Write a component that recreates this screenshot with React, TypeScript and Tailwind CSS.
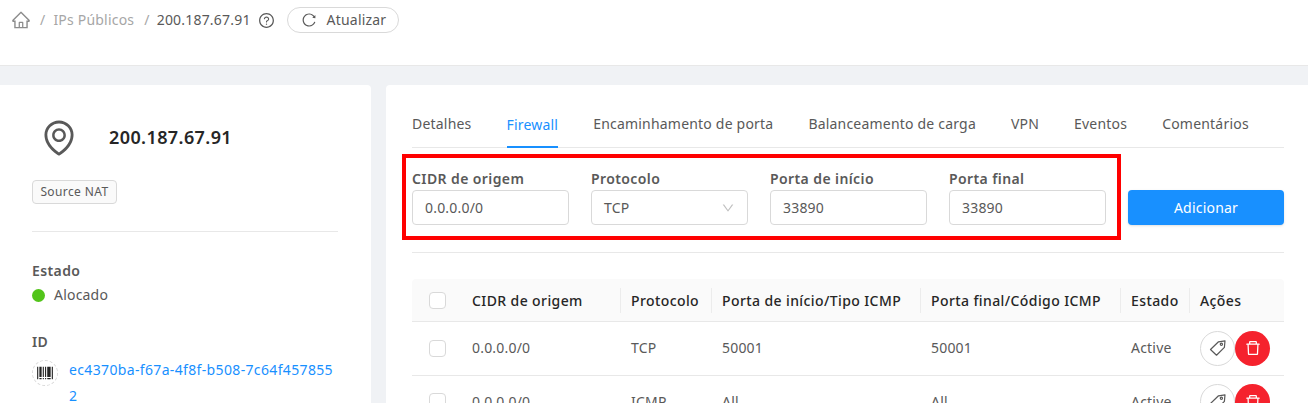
import React from 'react';
import {
  AiOutlineBarcode,
  AiOutlineDelete,
  AiOutlineDown,
  AiOutlineEnvironment,
  AiOutlineHome,
  AiOutlineQuestionCircle,
  AiOutlineReload,
} from 'react-icons/ai';

const tabs = ['Detalhes', 'Firewall', 'Encaminhamento de porta', 'Balanceamento de carga', 'VPN', 'Eventos', 'Comentários'];

const headers = [
  { label: 'CIDR de origem', w: 'w-[159px]' },
  { label: 'Protocolo', w: 'w-[91px]' },
  { label: 'Porta de início/Tipo ICMP', w: 'w-[209px]' },
  { label: 'Porta final/Código ICMP', w: 'w-[200px]' },
  { label: 'Estado', w: 'w-[69px]' },
];

const rows = [
  ['0.0.0.0/0', 'TCP', '50001', '50001', 'Active'],
  ['0.0.0.0/0', 'ICMP', 'All', 'All', 'Active'],
];

const TagIcon = () => (
  <svg viewBox="0 0 18 18" className="h-[18px] w-[18px] text-[#595959]" fill="none" stroke="currentColor" strokeWidth="1.2" strokeLinejoin="round">
    <path d="M1.5 10.5 L9.5 2.8 L16 1.8 L15.4 8.4 L7.5 16.2 Z" />
    <circle cx="12.4" cy="5.2" r="1.1" />
  </svg>
);

const Field: React.FC<{ label: string; value: string; select?: boolean }> = ({ label, value, select }) => (
  <div className="w-[157px]">
    <div className="h-[25px] text-sm font-semibold leading-[28px] tracking-[0.4px] text-[#595959]">{label}</div>
    <div className="flex h-[35px] items-center justify-between rounded border border-[#d9d9d9] bg-white pl-[12px] pr-[12px] text-sm text-[#595959]">
      <span>{value}</span>
      {select && <AiOutlineDown className="h-[14px] w-[14px] text-[#bfbfbf]" />}
    </div>
  </div>
);

export default function App() {
  return (
    <div className="h-screen w-full overflow-hidden bg-[#f0f2f5] font-['Noto_Sans',sans-serif] text-sm tracking-[0.2px] text-[#595959]">
      {/* Page header */}
      <header className="flex h-[66px] items-start border-b border-[#e8e8e8] bg-white pl-[11px] pt-[7px]">
        <div className="flex h-[26px] items-center">
          <AiOutlineHome className="h-[20px] w-[20px] text-[#8c8c8c]" />
          <span className="ml-[9px] text-[#a6a6a6]">/</span>
          <span className="ml-[8px] text-[#a6a6a6]">IPs Públicos</span>
          <span className="ml-[10px] text-[#a6a6a6]">/</span>
          <span className="ml-[7px] text-[#595959]">200.187.67.91</span>
          <AiOutlineQuestionCircle className="ml-[7px] h-[17px] w-[17px] text-[#595959]" />
          <button className="ml-[12px] flex h-[26px] w-[112px] items-center gap-[10px] rounded-full border border-[#d9d9d9] bg-white pl-[13px] text-[#595959]">
            <AiOutlineReload className="h-[16px] w-[16px]" />
            <span>Atualizar</span>
          </button>
        </div>
      </header>

      <main className="mt-[19px] flex gap-[15px]">
        {/* Left info card */}
        <aside className="h-[340px] w-[371px] shrink-0 rounded-tr bg-white pl-[32px] pr-[33px] pt-[32px]">
          <div className="flex h-[42px] items-center">
            <AiOutlineEnvironment className="ml-[7px] h-[40px] w-[40px] text-[#595959]" />
            <span className="ml-[30px] text-[18px] font-semibold tracking-[0.4px] text-[#262626]">200.187.67.91</span>
          </div>
          <div className="mt-[21px] inline-flex h-[24px] w-[85px] items-center justify-center rounded border border-[#d9d9d9] bg-[#fafafa] text-xs tracking-[0.4px] text-[#595959]">
            Source NAT
          </div>
          <div className="mt-[27px] h-px bg-[#e8e8e8]" />
          <div className="mt-[28px] text-sm font-semibold leading-[22px] tracking-[0.4px]">Estado</div>
          <div className="mt-[1px] flex h-[24px] items-center gap-[9px]">
            <span className="h-[13px] w-[13px] rounded-full bg-[#52c41a]" />
            <span>Alocado</span>
          </div>
          <div className="mt-[24px] text-sm font-semibold leading-[22px] tracking-[0.4px]">ID</div>
          <div className="mt-[4px] flex gap-[11px]">
            <span className="mt-[3px] flex h-[26px] w-[26px] shrink-0 items-center justify-center rounded-full border border-dashed border-[#d9d9d9]">
              <AiOutlineBarcode className="h-[18px] w-[18px] text-[#262626]" />
            </span>
            <a className="break-all leading-[26px] tracking-[0.35px] text-[#1890ff]">ec4370ba-f67a-4f8f-b508-7c64f4578552</a>
          </div>
        </aside>

        {/* Right tabs card */}
        <section className="h-[340px] min-w-0 flex-1 rounded-tl bg-white pl-[26px] pr-[24px]">
          <nav className="flex h-[63px] items-end gap-[35px] border-b border-[#e8e8e8]">
            {tabs.map((tab) => (
              <div
                key={tab}
                className={`flex h-[33px] items-start whitespace-nowrap leading-[19px] ${
                  tab === 'Firewall' ? '-mb-px border-b-2 border-[#1890ff] text-[#1890ff]' : ''
                }`}
              >
                {tab}
              </div>
            ))}
          </nav>

          {/* Form row, with the red highlight box */}
          <div className="flex h-[105px] items-start border-b border-[#e8e8e8] pt-[6px]">
            <div className="-ml-[10px] flex h-[86px] w-[719px] gap-[22px] border-4 border-[#ff0000] pl-[6px] pt-[7px]">
              <Field label="CIDR de origem" value="0.0.0.0/0" />
              <Field label="Protocolo" value="TCP" select />
              <Field label="Porta de início" value="33890" />
              <Field label="Porta final" value="33890" />
            </div>
            <button className="ml-[7px] mt-[36px] h-[35px] flex-1 rounded bg-[#1890ff] text-sm text-white shadow-sm">
              Adicionar
            </button>
          </div>

          {/* Rules table */}
          <div className="mt-[26px]">
            <div className="flex h-[43px] items-center rounded-t border-b border-[#e8e8e8] bg-[#fafafa] font-medium leading-[22px] tracking-[0.4px] text-[#262626]">
              <div className="w-[50px] pl-[17px]">
                <span className="block h-[17px] w-[17px] rounded border border-[#d9d9d9] bg-white" />
              </div>
              {headers.map((h) => (
                <div key={h.label} className={`${h.w} flex h-[25px] items-center whitespace-nowrap border-r border-[#ececec] pl-[10px] pt-[1px]`}>
                  {h.label}
                </div>
              ))}
              <div className="pl-[10px] pt-[1px]">Ações</div>
            </div>
            {rows.map((row, r) => (
              <div key={r} className="flex h-[53.5px] items-center border-b border-[#e8e8e8]">
                <div className="w-[50px] pl-[17px]">
                  <span className="block h-[17px] w-[17px] rounded border border-[#d9d9d9] bg-white" />
                </div>
                {row.map((cell, i) => (
                  <div key={i} className={`${headers[i].w} whitespace-nowrap pl-[10px]`}>
                    {cell}
                  </div>
                ))}
                <div className="flex pl-[10px]">
                  <button className="flex h-[35px] w-[35px] items-center justify-center rounded-full border border-[#d9d9d9] bg-white">
                    <TagIcon />
                  </button>
                  <button className="flex h-[35px] w-[35px] items-center justify-center rounded-full bg-[#f5222d]">
                    <AiOutlineDelete className="h-[18px] w-[18px] text-white" />
                  </button>
                </div>
              </div>
            ))}
          </div>
        </section>
      </main>
    </div>
  );
}
